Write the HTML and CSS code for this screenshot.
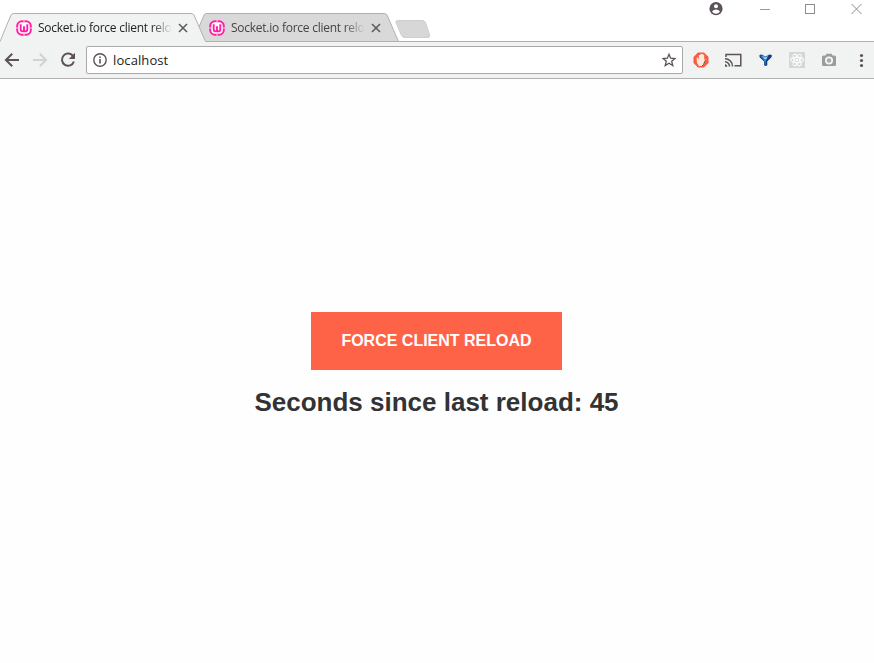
FILE: index.html
```html
<!DOCTYPE html>
<html lang="en">
<head>
<meta charset="utf-8">
<title>Socket.io force client reload</title>
<link rel="stylesheet" href="styles.css">
</head>
<body>
<svg class="defs" width="0" height="0" aria-hidden="true">
  <symbol id="wamp" viewBox="0 0 16 16">
    <rect x="1.200" y="1.200" width="13.600" height="13.600" rx="4.800" fill="#fff" stroke="#ff1fa5" stroke-width="2"/>
    <path d="M8 0v2.200M8 13.800V16M0 8h2.200M13.800 8H16" stroke="#fbd3ec" stroke-width="1"/>
    <path d="M4.700 4.300v4.900q0 2.200 1.800 2.200 1.500 0 1.500-2V6.200M8 9.400q0 2 1.500 2 1.800 0 1.800-2.200V4.300" fill="none" stroke="#ff1fa5" stroke-width="1.900"/>
  </symbol>
  <symbol id="cross" viewBox="0 0 10 10"><path d="M1 1l8 8M9 1l-8 8" stroke="#5c5c5c" stroke-width="1.600"/></symbol>
</svg>
<header class="titlebar">
  <div class="tabs">
    <div class="tab active">
      <svg class="shape" viewBox="0 0 207 29"><path d="M0 29L11 2Q12 .5 14 .5H191Q193 .5 194 2L205.500 28.500V29Z" fill="#f1f3f2"/><path d="M0 28.500L11 2Q12 .5 14 .5H191Q193 .5 194 2L205.500 28.500" fill="none" stroke="#b0b0b0"/></svg>
      <svg class="favicon"><use href="#wamp"/></svg>
      <span class="label">Socket.io force client relo</span>
      <svg class="close"><use href="#cross"/></svg>
    </div>
    <div class="tab">
      <svg class="shape" viewBox="0 0 207 29"><path d="M0 28.500L11 2Q12 .5 14 .5H191Q193 .5 194 2L205.500 28.500Z" fill="#d9d9d9" stroke="#b0b0b0"/></svg>
      <svg class="favicon"><use href="#wamp"/></svg>
      <span class="label">Socket.io force client relo</span>
      <svg class="close"><use href="#cross"/></svg>
    </div>
    <svg class="newtab" viewBox="0 0 36 19"><path d="M2.500 .5H27Q29.500 .5 30.500 2.500L34.500 15Q35 17.500 33 17.500H10Q7.500 17.500 6.500 15.500L1 2.500Q.5 .5 2.500 .5Z" fill="#d7d7d7" stroke="#cecece"/></svg>
  </div>
  <div class="controls">
    <svg class="user" viewBox="0 0 14 14"><circle cx="7" cy="6.700" r="6.600" fill="#5d515a"/><circle cx="7" cy="4.200" r="2" fill="#fff"/><path d="M3 9.500Q4.500 7.600 7 7.600T11 9.500Q9.500 11.700 7 11.700T3 9.500Z" fill="#fff"/></svg>
    <svg class="win" viewBox="0 0 11 11"><path d="M0 5.500H10" stroke="#999"/></svg>
    <svg class="win" viewBox="0 0 11 11"><rect x=".5" y=".5" width="9" height="9" fill="none" stroke="#8c8c8c"/></svg>
    <svg class="win" viewBox="0 0 11 11"><path d="M.5 0l10 10M10.500 0l-10 10" stroke="#8c8c8c"/></svg>
  </div>
</header>
<nav class="toolbar">
  <div class="nav">
    <svg viewBox="0 0 16 16"><path d="M15 8H2M8.200 1.700L1.900 8l6.300 6.300" fill="none" stroke="#5d515a" stroke-width="2"/></svg>
    <svg viewBox="0 0 16 16"><path d="M1 8h13M7.800 1.700L14.100 8l-6.300 6.300" fill="none" stroke="#d2d2d2" stroke-width="2"/></svg>
    <svg viewBox="0 0 16 16"><path d="M13.300 4.500A6.100 6.100 0 1 0 13.900 9.500" fill="none" stroke="#5d515a" stroke-width="2"/><path d="M15 .8V7H8.800Z" fill="#5d515a"/></svg>
  </div>
  <div class="omnibox">
    <svg viewBox="0 0 14 14"><circle cx="7" cy="7" r="6.200" fill="none" stroke="#5d515a" stroke-width="1.400"/><path d="M7 6v4.500M7 3.400V5" stroke="#5d515a" stroke-width="1.600"/></svg>
    <span class="url">localhost</span>
    <svg viewBox="0 0 14 14"><path d="M7 1.300L8.600 5.200 13 5.500 9.700 8.300 10.800 12.600 7 10.300 3.200 12.600 4.300 8.300 1 5.500 5.400 5.200Z" fill="none" stroke="#5d515a" stroke-width="1.300"/></svg>
  </div>
  <div class="extensions">
    <svg viewBox="0 0 16 16"><path d="M5 .5h6L15.500 5v6L11 15.500H5L.5 11V5Z" fill="#fb5b3c"/><path d="M3.600 6l1.200-.8 1 2.600V3.200l1.400-.5L7.800 2l1.400-.2.6.8 1.400.2V8l1.300-1.200 1 .5L11 12.500 9.500 14H6L4 11Z" fill="#fbe9dc"/><path d="M12.800 7.500L10.500 12.500 9 14" fill="none" stroke="#6b4b35"/></svg>
    <svg class="cast" viewBox="0 0 18 16"><path d="M2 5V2.400H16.800V13.800H10.500" fill="none" stroke="#5d515a" stroke-width="1.500"/><path d="M1 6.800A7.500 7.500 0 0 1 8.500 14.500M1 9.800A4.500 4.500 0 0 1 5.500 14.500" fill="none" stroke="#5d515a" stroke-width="1.500"/><path d="M1 12.300A2 2 0 0 1 3.200 14.700H1Z" fill="#5d515a"/></svg>
    <svg viewBox="0 0 16 16"><path d="M1.500 3L4.500 1.500 8 3.500 12 1.500 15.500 3 16 5 11 11V14.500L8.500 15.500 6 14.500V11L1 5Z" fill="#fff" stroke="#ddd" stroke-width=".5"/><path d="M2.300 3.500Q4 1.800 6 3.200L8.500 4.600 11 3.200Q13 1.800 15 3.500L14.500 5.200 10.300 9.500V13.200Q8.500 14.700 7 13.200V9.500L2.600 5.200Z" fill="#153f7a"/><path d="M3.500 3.700Q5 3 7 4.700L9.500 5V7.500L8.500 9.500V13L7.500 12.500V9Z" fill="#2b91e0"/><path d="M6 3.500L8.500 5.500 11 3.500 9.500 7H7.500Z" fill="#9fd4f7"/></svg>
    <svg viewBox="0 0 16 16"><path d="M0 0h16v16H0Z" fill="#d6d6d6"/><g fill="none" stroke="#fafafa" stroke-width="1.100"><ellipse cx="8" cy="8" rx="6.500" ry="2.600"/><ellipse cx="8" cy="8" rx="6.500" ry="2.600" transform="rotate(60 8 8)"/><ellipse cx="8" cy="8" rx="6.500" ry="2.600" transform="rotate(120 8 8)"/></g><circle cx="8" cy="8" r="1.300" fill="#fff"/></svg>
    <svg viewBox="0 0 16 16"><path d="M2.500 3.500H4.500L5.500 1.700H10.500L11.500 3.500H13.500Q15 3.500 15 5V12.500Q15 14 13.500 14H2.500Q1 14 1 12.500V5Q1 3.500 2.500 3.500Z" fill="#9a9c9b"/><circle cx="8" cy="8.500" r="3.200" fill="#aaa" stroke="#f5f5f5" stroke-width="1.700"/></svg>
    <svg viewBox="0 0 16 16"><g fill="#5d515a"><circle cx="8.500" cy="3.500" r="1.600"/><circle cx="8.500" cy="8.500" r="1.600"/><circle cx="8.500" cy="13.500" r="1.600"/></g></svg>
  </div>
</nav>
<main class="page">
  <button class="reload" type="button">FORCE CLIENT RELOAD</button>
  <h1 class="counter">Seconds since last reload: 45</h1>
</main>
</body>
</html>
```
FILE: styles.css
```css
* { box-sizing: border-box; }
body {
  margin: 0;
  height: 663px;
  display: flex;
  flex-direction: column;
  overflow: hidden;
  background: #fefefe;
  font-family: "Open Sans", sans-serif;
}
svg { display: block; flex: none; }
.defs { position: absolute; }
.titlebar {
  height: 42px;
  flex: none;
  display: flex;
  justify-content: space-between;
  border-bottom: 1px solid #b0b0b0;
  background: #fff;
}
.tabs { display: flex; padding-top: 13px; }
.tab {
  position: relative;
  z-index: 0;
  width: 207px;
  height: 29px;
  flex: none;
  display: flex;
  align-items: center;
  padding-left: 16px;
  margin-right: -14px;
}
.tab.active { z-index: 1; }
.shape { position: absolute; left: 0; top: 0; width: 207px; height: 29px; z-index: -1; }
.favicon { width: 16px; height: 16px; }
.label {
  width: 140px;
  margin-left: 6px;
  white-space: nowrap;
  font-size: 12px;
  line-height: 18px;
  letter-spacing: -0.25px;
  color: #222;
  -webkit-mask-image: linear-gradient(to right, #000 114px, transparent 134px);
  mask-image: linear-gradient(to right, #000 114px, transparent 134px);
}
.tab:not(.active) .label { color: #444; }
.close { width: 10px; height: 10px; }
.newtab { width: 36px; height: 19px; margin: 7px 0 0 9px; }
.controls { display: flex; align-items: flex-start; padding: 2px 12px 0 0; }
.user { width: 14px; height: 14px; margin-right: 37px; }
.win { width: 11px; height: 11px; margin: 2px 0 0 34px; }
.user + .win { margin-left: 0; }
.controls .win:last-child { margin-left: 35px; }
.toolbar {
  height: 37px;
  flex: none;
  display: flex;
  align-items: center;
  border-bottom: 1px solid #b0b0b0;
  background: #f1f3f2;
}
.nav { display: flex; gap: 12px; padding-left: 4px; }
.nav svg { width: 16px; height: 16px; }
.omnibox {
  width: 597px;
  height: 28px;
  margin-left: 10px;
  display: flex;
  align-items: center;
  padding: 0 6px;
  border: 1px solid #a9a9a9;
  border-radius: 2px;
  background: #fff;
}
.omnibox svg { width: 14px; height: 14px; }
.url { flex: 1; margin-left: 6px; font-size: 13px; line-height: 20px; letter-spacing: 0.1px; color: #222; }
.extensions { display: flex; gap: 16px; margin-left: 10px; }
.extensions svg { width: 16px; height: 16px; }
.extensions .cast { width: 18px; margin: 0 -1px; }
.page {
  flex: 1;
  display: flex;
  flex-direction: column;
  align-items: center;
  padding: 233px 1px 0 0;
  font-family: "Liberation Sans", Arial, sans-serif;
}
.reload {
  width: 251px;
  height: 58px;
  padding: 0;
  border: 0;
  background: #ff6347;
  color: #fff;
  font: bold 16px/58px "Liberation Sans", Arial, sans-serif;
}
.counter {
  margin: 16px 0 0;
  font-size: 26px;
  line-height: 32px;
  color: #333;
  white-space: nowrap;
}
```
